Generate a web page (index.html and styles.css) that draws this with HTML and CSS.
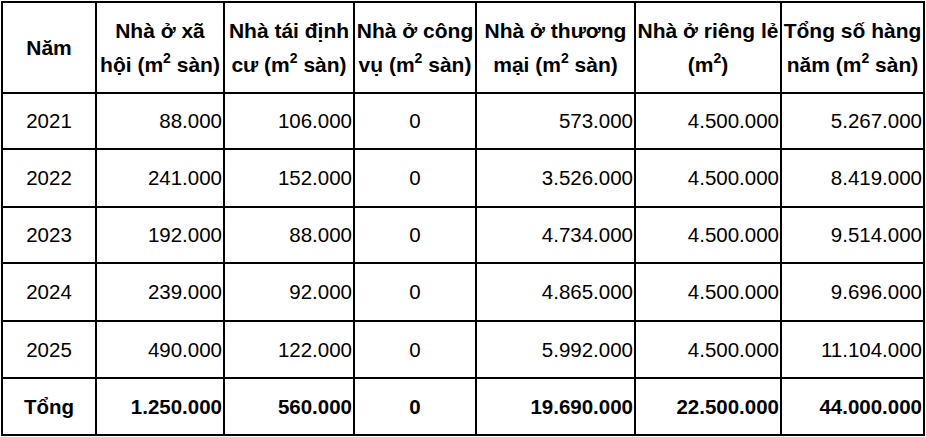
FILE: index.html
```html
<!DOCTYPE html>
<html lang="vi">
<head>
<meta charset="utf-8">
<title>Bảng diện tích nhà ở</title>
<link rel="stylesheet" href="styles.css">
</head>
<body>
<div class="table">
  <div class="cell head"><span>Năm</span></div>
  <div class="cell head"><span>Nhà ở xã<br>hội (m<sup>2</sup> sàn)</span></div>
  <div class="cell head"><span>Nhà tái định<br>cư (m<sup>2</sup> sàn)</span></div>
  <div class="cell head"><span>Nhà ở công<br>vụ (m<sup>2</sup> sàn)</span></div>
  <div class="cell head"><span>Nhà ở thương<br>mại (m<sup>2</sup> sàn)</span></div>
  <div class="cell head"><span>Nhà ở riêng lẻ<br>(m<sup>2</sup>)</span></div>
  <div class="cell head"><span>Tổng số hàng<br>năm (m<sup>2</sup> sàn)</span></div>

  <div class="cell c">2021</div>
  <div class="cell r">88.000</div>
  <div class="cell r">106.000</div>
  <div class="cell c">0</div>
  <div class="cell r">573.000</div>
  <div class="cell r">4.500.000</div>
  <div class="cell r">5.267.000</div>

  <div class="cell c">2022</div>
  <div class="cell r">241.000</div>
  <div class="cell r">152.000</div>
  <div class="cell c">0</div>
  <div class="cell r">3.526.000</div>
  <div class="cell r">4.500.000</div>
  <div class="cell r">8.419.000</div>

  <div class="cell c">2023</div>
  <div class="cell r">192.000</div>
  <div class="cell r">88.000</div>
  <div class="cell c">0</div>
  <div class="cell r">4.734.000</div>
  <div class="cell r">4.500.000</div>
  <div class="cell r">9.514.000</div>

  <div class="cell c">2024</div>
  <div class="cell r">239.000</div>
  <div class="cell r">92.000</div>
  <div class="cell c">0</div>
  <div class="cell r">4.865.000</div>
  <div class="cell r">4.500.000</div>
  <div class="cell r">9.696.000</div>

  <div class="cell c">2025</div>
  <div class="cell r">490.000</div>
  <div class="cell r">122.000</div>
  <div class="cell c">0</div>
  <div class="cell r">5.992.000</div>
  <div class="cell r">4.500.000</div>
  <div class="cell r">11.104.000</div>

  <div class="cell c b">Tổng</div>
  <div class="cell r b">1.250.000</div>
  <div class="cell r b">560.000</div>
  <div class="cell c b">0</div>
  <div class="cell r b">19.690.000</div>
  <div class="cell r b">22.500.000</div>
  <div class="cell r b">44.000.000</div>
</div>
</body>
</html>
```

FILE: styles.css
```css
html, body {
  margin: 0;
  padding: 0;
  background: #fff;
}

body {
  padding: 1px;
  font-family: "Liberation Sans", Arial, sans-serif;
  color: #000;
}

.table {
  display: grid;
  width: 924px;
  box-sizing: border-box;
  grid-template-columns: 92px 126px 128px 120px 157px 144px 141px;
  grid-template-rows: 89px 54px 56px 54px 56px 55px 55px;
  gap: 2px;
  padding: 2px;
  background: #000;
}

.cell {
  background: #fff;
  display: flex;
  align-items: center;
  font-size: 20.5px;
  white-space: nowrap;
  overflow: hidden;
}

.head {
  justify-content: center;
  text-align: center;
  font-weight: bold;
  font-size: 21px;
  line-height: 34px;
}

.head sup {
  font-size: 14px;
  line-height: 0;
  vertical-align: 9px;
}

.c {
  justify-content: center;
}

.r {
  justify-content: flex-end;
  padding-right: 1px;
}

.b {
  font-weight: bold;
}
```
